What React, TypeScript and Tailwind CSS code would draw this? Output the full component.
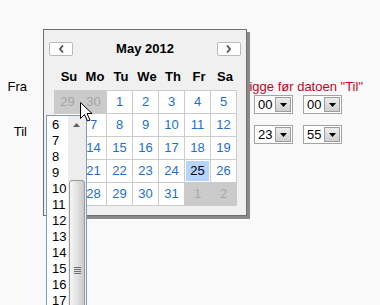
import React from 'react';

const days = ['Su', 'Mo', 'Tu', 'We', 'Th', 'Fr', 'Sa'];

const weeks: { d: number; other?: boolean; sel?: boolean }[][] = [
  [{ d: 29, other: true }, { d: 30, other: true }, { d: 1 }, { d: 2 }, { d: 3 }, { d: 4 }, { d: 5 }],
  [{ d: 6 }, { d: 7 }, { d: 8 }, { d: 9 }, { d: 10 }, { d: 11 }, { d: 12 }],
  [{ d: 13 }, { d: 14 }, { d: 15 }, { d: 16 }, { d: 17 }, { d: 18 }, { d: 19 }],
  [{ d: 20 }, { d: 21 }, { d: 22 }, { d: 23 }, { d: 24 }, { d: 25, sel: true }, { d: 26 }],
  [{ d: 27 }, { d: 28 }, { d: 29 }, { d: 30 }, { d: 31 }, { d: 1, other: true }, { d: 2, other: true }],
];

const hours = ['6', '7', '8', '9', '10', '11', '12', '13', '14', '15', '16', '17'];

const TimeSelect: React.FC<{ value: string }> = ({ value }) => (
  <div className="flex h-[19px] w-[39px] items-center border border-[#a3a3a3] bg-white">
    <span className="flex-1 pl-[3px] text-[13px] leading-[17px] text-black">{value}</span>
    <span className="mr-[1px] flex h-[15px] w-[16px] items-center justify-center border border-[#9c9c9c] bg-gradient-to-b from-[#ececec] to-[#cfcfcf]">
      <svg width="7" height="4" viewBox="0 0 7 4">
        <path d="M0 0H7L3.5 4Z" fill="#000" />
      </svg>
    </span>
  </div>
);

const NavButton: React.FC<{ dir: 'prev' | 'next' }> = ({ dir }) => (
  <button className="flex h-[14px] w-[24px] items-center justify-center rounded-[2px] border border-[#b9b9b9] bg-white">
    <svg width="5" height="8" viewBox="0 0 5 8">
      <path
        d={dir === 'prev' ? 'M4 0.5L1 4L4 7.5' : 'M1 0.5L4 4L1 7.5'}
        fill="none"
        stroke="#555"
        strokeWidth="1.8"
      />
    </svg>
  </button>
);

export default function App() {
  return (
    <div className="relative h-[305px] w-[380px] overflow-hidden bg-[#f9f9f9] font-['Liberation_Sans',Arial,sans-serif] text-[13px] text-black">
      {/* form underneath */}
      <div className="pt-[79px]">
        <div className="flex h-[15px] items-center">
          <span className="w-[27px] text-right leading-[15px]">Fra</span>
          {/* the rest of the message sits under the popup */}
          <span className="ml-auto mr-[17px] whitespace-nowrap leading-[15px] text-[#c0061f]">
            igge før datoen &quot;Til&quot;
          </span>
        </div>
        <div className="mt-[1px] flex gap-[10px] pl-[254px]">
          <TimeSelect value="00" />
          <TimeSelect value="00" />
        </div>
        <div className="mt-[10px] flex items-center">
          <span className="w-[27px] pb-[6px] text-right leading-[15px]">Til</span>
          <div className="ml-[227px] flex gap-[10px]">
            <TimeSelect value="23" />
            <TimeSelect value="55" />
          </div>
        </div>
      </div>

      {/* date picker popup */}
      <div className="absolute left-[43px] top-[29px] h-[187px] w-[204px] border border-[#707070] bg-[#f0f0f0] px-[5px] shadow-[3px_3px_0_#8a8a8a]">
        <div className="mt-[12px] flex h-[14px] items-center justify-between">
          <NavButton dir="prev" />
          <span className="text-[13px] font-bold">May 2012</span>
          <NavButton dir="next" />
        </div>
        <div className="ml-[6px] mt-[14px] grid w-[183px] grid-cols-[repeat(7,26px)] pl-[1px]">
          {days.map((d) => (
            <span key={d} className="text-center text-[13px] font-bold leading-[14px]">
              {d}
            </span>
          ))}
        </div>
        <div className="ml-[5px] mt-[6px] grid w-[183px] grid-cols-[repeat(7,26px)] border-l border-t border-[#cccccc]">
          {weeks.flat().map((c, i) => (
            <span
              key={i}
              className={
                'flex h-[23px] items-center justify-center border-b border-r text-[13px] ' +
                (c.other
                  ? 'border-[#cbcbcb] bg-[#cbcbcb] text-[#a6a6a6]'
                  : c.sel
                    ? 'border-[#cccccc] bg-white p-[1px] text-black'
                    : 'border-[#cccccc] bg-white text-[#1b6fcd]')
              }
            >
              {c.sel ? (
                <span className="flex h-full w-full items-center justify-center bg-[#b5d5fc]">{c.d}</span>
              ) : (
                c.d
              )}
            </span>
          ))}
        </div>
      </div>

      {/* open hour list */}
      <div className="absolute left-[46px] top-[115px] h-[200px] w-[41px] border border-[#7f9db9] bg-white">
        <div className="pt-[1px]">
          {hours.map((h) => (
            <div key={h} className="h-[16px] pl-[5px] text-[13px] leading-[16px]">
              {h}
            </div>
          ))}
        </div>
        <div className="absolute right-0 top-0 h-full w-[18px] bg-[#ededed]">
          <svg className="absolute left-[5px] top-[7px]" width="7" height="4" viewBox="0 0 7 4">
            <path d="M0 4H7L3.5 0Z" fill="#606060" />
          </svg>
          <div className="absolute left-[1px] top-[64px] flex h-[160px] w-[16px] flex-col items-center rounded-t-[3px] border border-[#9a9a9a] bg-gradient-to-r from-[#f4f4f4] via-[#e2e2e2] to-[#c8c8c8]">
            <div className="mt-[86px] flex flex-col gap-[1px]">
              <span className="h-[1px] w-[7px] bg-[#707070]" />
              <span className="h-[1px] w-[7px] bg-[#707070]" />
              <span className="h-[1px] w-[7px] bg-[#707070]" />
              <span className="h-[1px] w-[7px] bg-[#707070]" />
            </div>
          </div>
        </div>
      </div>

      {/* mouse pointer */}
      <svg className="absolute left-[80px] top-[102px]" width="13" height="20" viewBox="0 0 13 20">
        <path
          d="M0.5 0.5V16.5L4.5 12.5L7.5 19L10 18L7 11.5H12Z"
          fill="#fff"
          stroke="#000"
          strokeWidth="1"
          strokeLinejoin="round"
        />
      </svg>
    </div>
  );
}
